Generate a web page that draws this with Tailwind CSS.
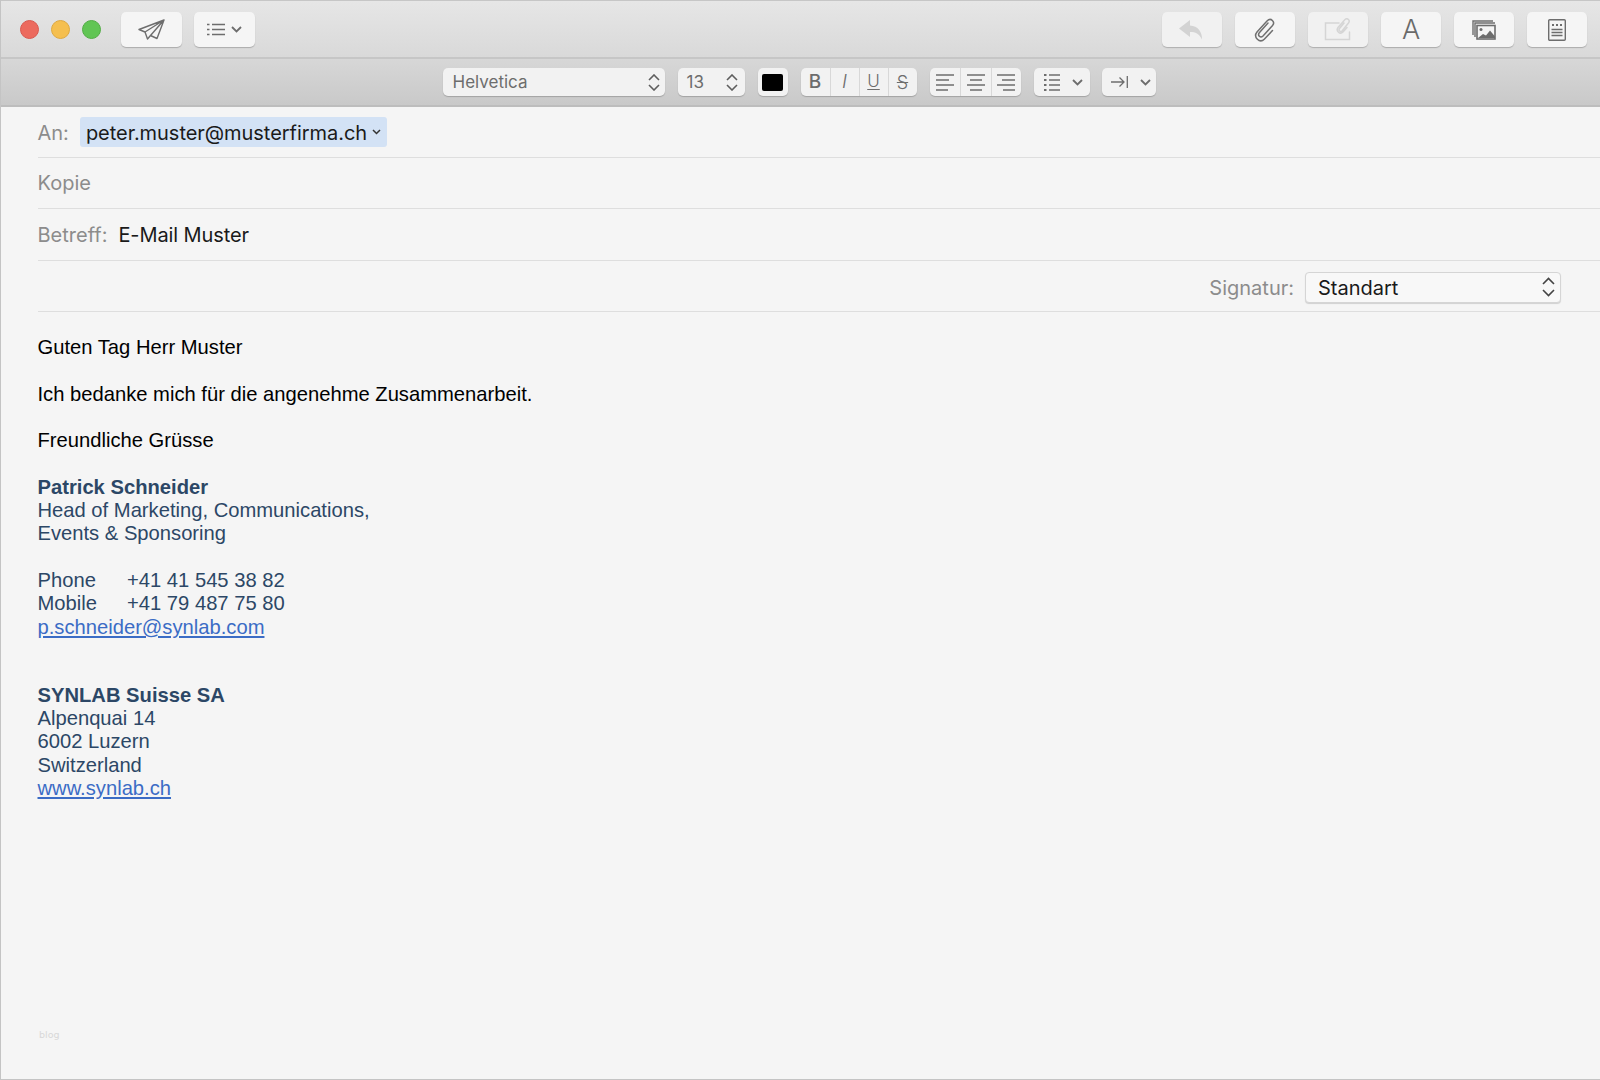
<!DOCTYPE html>
<html lang="de">
<head>
    <meta charset="UTF-8">
    <title>E-Mail Muster</title>
    <script src="https://cdn.jsdelivr.net/npm/@tailwindcss/browser@4"></script>
</head>
<body class="bg-[#f5f5f5]">
<div class="w-[1600px] h-[1080px] overflow-hidden flex flex-col border-l border-b border-[#c4c4c4] bg-[#f5f5f5] font-['Inter',sans-serif]">

    <!-- title bar -->
    <div class="h-[59px] shrink-0 flex items-center justify-between pl-[19px] pr-[13px] pt-[1px] border-t border-b-2 border-[#c6c6c6] bg-gradient-to-b from-[#e6e6e6] to-[#d9d9d9]">
        <div class="flex items-center">
            <div class="w-[19px] h-[19px] rounded-full bg-[#ec6a5e] border border-[#d9584f]"></div>
            <div class="w-[19px] h-[19px] rounded-full bg-[#f5bf4f] border border-[#dfa93f] ml-[12px]"></div>
            <div class="w-[19px] h-[19px] rounded-full bg-[#61c554] border border-[#52ad45] ml-[12px]"></div>
            <div class="w-[61px] h-[35px] ml-[20px] rounded-[5px] bg-[#f5f5f5] shadow-[0_1px_1px_rgba(0,0,0,0.22)] flex items-center justify-center">
                <svg width="27" height="21" viewBox="0 0 27 21" fill="none" stroke="#6d6d6d" stroke-width="1.4" stroke-linejoin="round"><path d="M26 1 1 10.500l6 2.500L26 1 12.500 16.500l6.500 3L26 1ZM7 13l2.500 7 3-3.500"/></svg>
            </div>
            <div class="w-[61px] h-[35px] ml-[12px] rounded-[5px] bg-[#f5f5f5] shadow-[0_1px_1px_rgba(0,0,0,0.22)] flex items-center justify-center gap-[6px]">
                <svg width="18" height="13" viewBox="0 0 18 13" fill="none" stroke="#6d6d6d" stroke-width="1.4"><path d="M0 1.500h2.500M0 6.500h2.500M0 11.500h2.500M5 1.500h13M5 6.500h13M5 11.500h13"/></svg>
                <svg width="11" height="7" viewBox="0 0 11 7" fill="none" stroke="#6d6d6d" stroke-width="1.8"><path d="m1 1 4.500 4.500L10 1"/></svg>
            </div>
        </div>
        <div class="flex items-center gap-[13px]">
            <div class="w-[60px] h-[35px] rounded-[5px] bg-[#f1f1f1] shadow-[0_1px_1px_rgba(0,0,0,0.2)] flex items-center justify-center">
                <svg width="26" height="20" viewBox="0 0 26 20" fill="#d3d3d3"><path d="M11 0 0 8.500 11 17v-5c5.500 0 9 1.500 12 7.500 0-8-4-13.500-12-14Z"/></svg>
            </div>
            <div class="w-[60px] h-[35px] rounded-[5px] bg-[#f5f5f5] shadow-[0_1px_1px_rgba(0,0,0,0.22)] flex items-center justify-center">
                <svg width="22" height="24" viewBox="0 0 22 24" fill="none" stroke="#707070" stroke-width="1.5" stroke-linecap="round"><path d="M14 5 5.500 14.500c-2.500 3 1 6 3.500 3.500L18.500 7.500c3-3.500-1.500-8.500-5.500-4.500L3 14c-4 5 2.500 12 7.500 7l8-8.500"/></svg>
            </div>
            <div class="w-[60px] h-[35px] rounded-[5px] bg-[#f1f1f1] shadow-[0_1px_1px_rgba(0,0,0,0.2)] flex items-center justify-center">
                <svg width="28" height="24" viewBox="0 0 28 24" fill="none" stroke="#d5d5d5" stroke-width="1.5" stroke-linecap="round"><path d="M15 5H1.500v16.500h24V14"/><path d="M20 5l-4.500 5.500c-1.500 2 1 4 2.500 2.500l6.500-8c2-2.500-1-5.500-3.500-3.500L14 9.500c-2.500 3.500 2 7.500 5 4.500l4-4.500"/></svg>
            </div>
            <div class="w-[60px] h-[35px] rounded-[5px] bg-[#f5f5f5] shadow-[0_1px_1px_rgba(0,0,0,0.22)] flex items-center justify-center text-[27px] leading-none font-light text-[#6a6a6a]">A</div>
            <div class="w-[60px] h-[35px] rounded-[5px] bg-[#f5f5f5] shadow-[0_1px_1px_rgba(0,0,0,0.22)] flex items-center justify-center">
                <svg width="24" height="20" viewBox="0 0 24 20" fill="none" stroke="#6d6d6d" stroke-width="1.4"><path d="M1 15V1h20M3 17V3h20"/><rect x="5" y="5.500" width="18" height="13.500" stroke-width="1.600"/><circle cx="9" cy="9.500" r="1.500" fill="#6d6d6d" stroke="none"/><path d="m6 18 5-4 3 1.500 4-5 5 6v1.500Z" fill="#6d6d6d" stroke="none"/></svg>
            </div>
            <div class="w-[60px] h-[35px] rounded-[5px] bg-[#f5f5f5] shadow-[0_1px_1px_rgba(0,0,0,0.22)] flex items-center justify-center">
                <svg width="18" height="22" viewBox="0 0 18 22" fill="none" stroke="#6d6d6d" stroke-width="1.400"><rect x="0.700" y="0.700" width="16.600" height="20.600" rx="1"/><path d="M4 6h2M8 6h2M12 6h2" stroke-width="2"/><path d="M3.500 10.500h11M3.500 13.500h11M3.500 16.500h11"/></svg>
            </div>
        </div>
    </div>

    <!-- format bar -->
    <div class="h-[48px] shrink-0 flex items-center justify-center gap-[13px] pr-[3px] border-b-2 border-[#bdbdbd] bg-gradient-to-b from-[#d7d7d7] to-[#c9c9c9] text-[#6d6d6d]">
        <div class="w-[222px] h-[28px] rounded-[5px] bg-[#f2f2f2] shadow-[0_1px_1px_rgba(0,0,0,0.2)] flex items-center justify-between pl-[10px] pr-[5px] text-[17px]">
            <span class="pt-[2px]">Helvetica</span>
            <svg width="12" height="17" viewBox="0 0 12 17" fill="none" stroke="#5e5e5e" stroke-width="1.600"><path d="m1 6 5-5 5 5M1 11l5 5 5-5"/></svg>
        </div>
        <div class="w-[67px] h-[28px] rounded-[5px] bg-[#f2f2f2] shadow-[0_1px_1px_rgba(0,0,0,0.2)] flex items-center justify-between pl-[9px] pr-[7px] text-[17px]">
            <span class="pt-[2px]">13</span>
            <svg width="12" height="17" viewBox="0 0 12 17" fill="none" stroke="#5e5e5e" stroke-width="1.600"><path d="m1 6 5-5 5 5M1 11l5 5 5-5"/></svg>
        </div>
        <div class="w-[30px] h-[28px] rounded-[5px] bg-[#f2f2f2] shadow-[0_1px_1px_rgba(0,0,0,0.2)] flex items-center justify-center">
            <div class="w-[21px] h-[17px] rounded-[2px] bg-black"></div>
        </div>
        <div class="w-[116px] h-[28px] rounded-[5px] bg-[#f2f2f2] shadow-[0_1px_1px_rgba(0,0,0,0.2)] flex divide-x divide-[#d8d8d8] text-[19px]">
            <div class="w-[30px] flex items-center justify-center font-medium">B</div>
            <div class="w-[29px] flex items-center justify-center italic font-light">I</div>
            <div class="w-[29px] flex items-center justify-center underline underline-offset-2 font-light text-[17px]">U</div>
            <div class="w-[28px] flex items-center justify-center line-through font-light text-[18px]">S</div>
        </div>
        <div class="w-[91px] h-[28px] rounded-[5px] bg-[#f2f2f2] shadow-[0_1px_1px_rgba(0,0,0,0.2)] flex divide-x divide-[#d8d8d8]">
            <div class="w-[31px] flex items-center justify-center">
                <svg width="18" height="17" viewBox="0 0 18 17" stroke="#6d6d6d" stroke-width="1.300"><path d="M0 1h18M0 6h13M0 11h18M0 16h12"/></svg>
            </div>
            <div class="w-[31px] flex items-center justify-center">
                <svg width="18" height="17" viewBox="0 0 18 17" stroke="#6d6d6d" stroke-width="1.300"><path d="M0 1h18M3 6h12M0 11h18M3 16h12"/></svg>
            </div>
            <div class="w-[29px] flex items-center justify-center">
                <svg width="18" height="17" viewBox="0 0 18 17" stroke="#6d6d6d" stroke-width="1.300"><path d="M0 1h18M5 6h13M0 11h18M6 16h12"/></svg>
            </div>
        </div>
        <div class="w-[56px] h-[28px] rounded-[5px] bg-[#f2f2f2] shadow-[0_1px_1px_rgba(0,0,0,0.2)] flex items-center pl-[10px] gap-[12px]">
            <svg width="16" height="17" viewBox="0 0 16 17" fill="none" stroke="#6d6d6d" stroke-width="1.300"><path d="M0 1h2.500M0 6h2.500M0 11h2.500M0 16h2.500" stroke-width="2"/><path d="M5 1h11M5 6h11M5 11h11M5 16h11"/></svg>
            <svg width="11" height="7" viewBox="0 0 11 7" fill="none" stroke="#6d6d6d" stroke-width="1.800"><path d="m1 1 4.500 4.500L10 1"/></svg>
        </div>
        <div class="w-[54px] h-[28px] rounded-[5px] bg-[#f2f2f2] shadow-[0_1px_1px_rgba(0,0,0,0.2)] flex items-center pl-[9px] gap-[12px] -ml-[1px]">
            <svg width="17" height="12" viewBox="0 0 17 12" fill="none" stroke="#6d6d6d" stroke-width="1.300"><path d="M0 6h13M8.500 1.500 13 6l-4.500 4.500M16.300 0v12"/></svg>
            <svg width="11" height="7" viewBox="0 0 11 7" fill="none" stroke="#6d6d6d" stroke-width="1.800"><path d="m1 1 4.500 4.500L10 1"/></svg>
        </div>
    </div>

    <!-- address fields -->
    <div class="shrink-0 pl-[36.5px] text-[20px] text-[#8c8c8c]">
        <div class="h-[51px] flex items-center gap-[11px] border-b border-[#dedede]">
            <span class="pt-[1px]">An:</span>
            <div class="h-[30px] w-[307px] rounded-[3px] bg-[#d3e2f5] flex items-center pl-[6px] text-[#1a1a1a]">
                <span class="pt-[1px] tracking-[-0.04px]">peter.muster@musterfirma.ch</span>
                <svg class="ml-[5px]" width="9" height="6" viewBox="0 0 9 6" fill="none" stroke="#333" stroke-width="1.500"><path d="m1 1 3.500 3.500L8 1"/></svg>
            </div>
        </div>
        <div class="h-[51px] flex items-center border-b border-[#dedede]">Kopie</div>
        <div class="h-[52px] flex items-center gap-[11px] border-b border-[#dedede]">
            <span>Betreff:</span>
            <span class="text-[#1a1a1a] tracking-[-0.1px]">E-Mail Muster</span>
        </div>
        <div class="h-[51px] flex items-center justify-end gap-[11px] pt-[2px] pr-[39px] border-b border-[#dedede]">
            <span class="pt-[1px]">Signatur:</span>
            <div class="w-[256px] h-[31px] rounded-[4px] bg-[#f8f8f8] border border-[#d5d5d5] shadow-[0_1px_1px_rgba(0,0,0,0.15)] flex items-center justify-between pl-[12px] pr-[5px] text-[#1a1a1a]">
                <span class="pt-[1px]">Standart</span>
                <svg width="13" height="20" viewBox="0 0 13 20" fill="none" stroke="#444" stroke-width="1.600"><path d="m1 7 5.500-5.500L12 7M1 13l5.500 5.500L12 13"/></svg>
            </div>
        </div>
    </div>

    <!-- message body -->
    <div class="relative flex-1 pl-[36.5px] pt-[24px] font-['Liberation_Sans',sans-serif] text-[20.2px] leading-[23.3px] text-black">
        <p>Guten Tag Herr Muster</p>
        <p class="mt-[23.3px]">Ich bedanke mich für die angenehme Zusammenarbeit.</p>
        <p class="mt-[23.3px]">Freundliche Grüsse</p>
        <div class="mt-[23.3px] text-[#2c4766]">
            <p class="font-bold">Patrick Schneider</p>
            <p>Head of Marketing, Communications,</p>
            <p>Events &amp; Sponsoring</p>
            <div class="mt-[23.3px] grid grid-cols-[89.5px_auto] w-max">
                <span>Phone</span><span>+41 41 545 38 82</span>
                <span>Mobile</span><span>+41 79 487 75 80</span>
            </div>
            <a href="#" class="block w-max underline text-[#3b6cc5]">p.schneider@synlab.com</a>
            <p class="mt-[45px] font-bold">SYNLAB Suisse SA</p>
            <p>Alpenquai 14</p>
            <p>6002 Luzern</p>
            <p>Switzerland</p>
            <a href="#" class="block w-max underline text-[#3b6cc5]">www.synlab.ch</a>
        </div>
        <span class="absolute left-[38px] top-[717px] text-[9.500px] leading-[12px] text-[#d8d8d8] font-['DejaVu_Sans',sans-serif]">blog</span>
    </div>
</div>
</body>
</html>
